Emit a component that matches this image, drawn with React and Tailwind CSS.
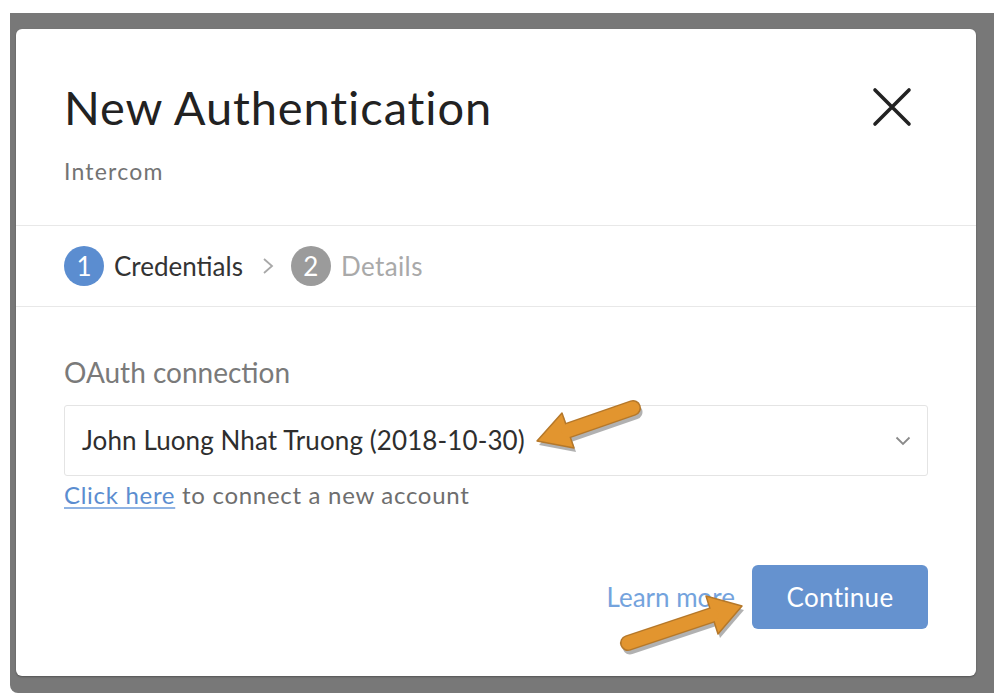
import React from 'react';

const font = { fontFamily: 'Lato, "Noto Sans", sans-serif' };

function Arrow({ tail, tip, left, right }) {
    // orange annotation arrow: rounded shaft + triangular head
    const shaftEnd = [(left[0] + right[0]) / 2, (left[1] + right[1]) / 2];
    return (
        <g>
            <g transform="translate(2,4)" opacity="0.3">
                <line x1={tail[0]} y1={tail[1]} x2={shaftEnd[0]} y2={shaftEnd[1]} stroke="#000" strokeWidth="15" strokeLinecap="round" />
                <polygon points={`${tip[0]},${tip[1]} ${left[0]},${left[1]} ${right[0]},${right[1]}`} fill="#000" />
            </g>
            <line x1={tail[0]} y1={tail[1]} x2={shaftEnd[0]} y2={shaftEnd[1]} stroke="#b5782a" strokeWidth="16" strokeLinecap="round" />
            <polygon points={`${tip[0]},${tip[1]} ${left[0]},${left[1]} ${right[0]},${right[1]}`} fill="#e2952f" stroke="#b5782a" strokeWidth="1.5" strokeLinejoin="round" />
            <line x1={tail[0]} y1={tail[1]} x2={shaftEnd[0]} y2={shaftEnd[1]} stroke="#e2952f" strokeWidth="13" strokeLinecap="round" />
        </g>
    );
}

export default function App() {
    return (
        <div className="relative w-[994px] h-[696px] bg-white pt-[13px] pl-[10px] pb-[3px]" style={font}>
            <div className="h-full bg-[#787878] rounded-bl-lg pt-[16px] pl-[6px]">
                <div className="w-[960px] h-[647px] bg-white rounded-md flex flex-col shadow-[0_1px_2px_rgba(0,0,0,0.3)]">
                    {/* header */}
                    <div className="h-[197px] border-b border-[#e8e8e8] flex justify-between pl-[48px] pr-[64px] pt-[46px]">
                        <div>
                            <h1 className="text-[47px] leading-[64px] text-[#222] tracking-[0.9px]">New Authentication</h1>
                            <p className="text-[23px] text-[#737373] mt-[15px] tracking-[1.2px]">Intercom</p>
                        </div>
                        <svg width="40" height="40" viewBox="0 0 40 40" className="mt-[12px]">
                            <path d="M3 3 L37 37 M37 3 L3 37" stroke="#222" strokeWidth="3.6" strokeLinecap="round" />
                        </svg>
                    </div>

                    {/* steps */}
                    <div className="h-[81px] border-b border-[#e8e8e8] flex items-center pl-[48px] text-[26px]">
                        <span className="w-[40px] h-[40px] rounded-full bg-[#5b8dd0] text-white flex items-center justify-center">1</span>
                        <span className="ml-[10px] text-[#333]">Credentials</span>
                        <svg width="14" height="18" viewBox="0 0 14 18" className="ml-[18px] mr-[16px]">
                            <path d="M3 2 L11 9 L3 16" stroke="#a8a8a8" strokeWidth="1.8" fill="none" />
                        </svg>
                        <span className="w-[40px] h-[40px] rounded-full bg-[#9b9b9b] text-white flex items-center justify-center">2</span>
                        <span className="ml-[10px] text-[#a9a9a9] tracking-[0.4px]">Details</span>
                    </div>

                    {/* body */}
                    <div className="flex-1 flex flex-col pl-[48px] pr-[48px] pt-[45px]">
                        <label className="text-[28px] text-[#7a7a7a] leading-[40px]">OAuth connection</label>
                        <div className="mt-[13px] h-[71px] border border-[#e4e4e4] rounded-[3px] flex items-center justify-between pl-[17px] pr-[16px]">
                            <span className="text-[26px] text-[#2e2e2e] tracking-[0.1px]">John Luong Nhat Truong (2018-10-30)</span>
                            <svg width="16" height="10" viewBox="0 0 16 10">
                                <path d="M1.5 1.5 L8 8 L14.5 1.5" stroke="#8a8a8a" strokeWidth="1.8" fill="none" />
                            </svg>
                        </div>
                        <p className="text-[24px] text-[#6e6e6e] mt-[2px] leading-[34px] tracking-[0.7px]">
                            <a className="text-[#5b8dd0] underline decoration-[#8fb3e3] underline-offset-[3px]">Click here</a> to connect a new account
                        </p>
                        <div className="flex justify-end items-center mt-[53px]">
                            <a className="text-[26px] text-[#74a3dd] mr-[17px]">Learn more</a>
                            <button className="w-[176px] h-[64px] rounded-md bg-[#6592cf] text-white text-[26px] tracking-[0.3px]">Continue</button>
                        </div>
                    </div>
                </div>
            </div>

            {/* annotation arrows */}
            <svg className="absolute left-0 top-0 pointer-events-none" width="994" height="696">
                <Arrow tail={[633, 408]} tip={[537, 441]} left={[562, 413]} right={[574, 448]} />
                <Arrow tail={[628, 643]} tip={[742, 606]} left={[706, 596]} right={[718, 634]} />
            </svg>
        </div>
    );
}
